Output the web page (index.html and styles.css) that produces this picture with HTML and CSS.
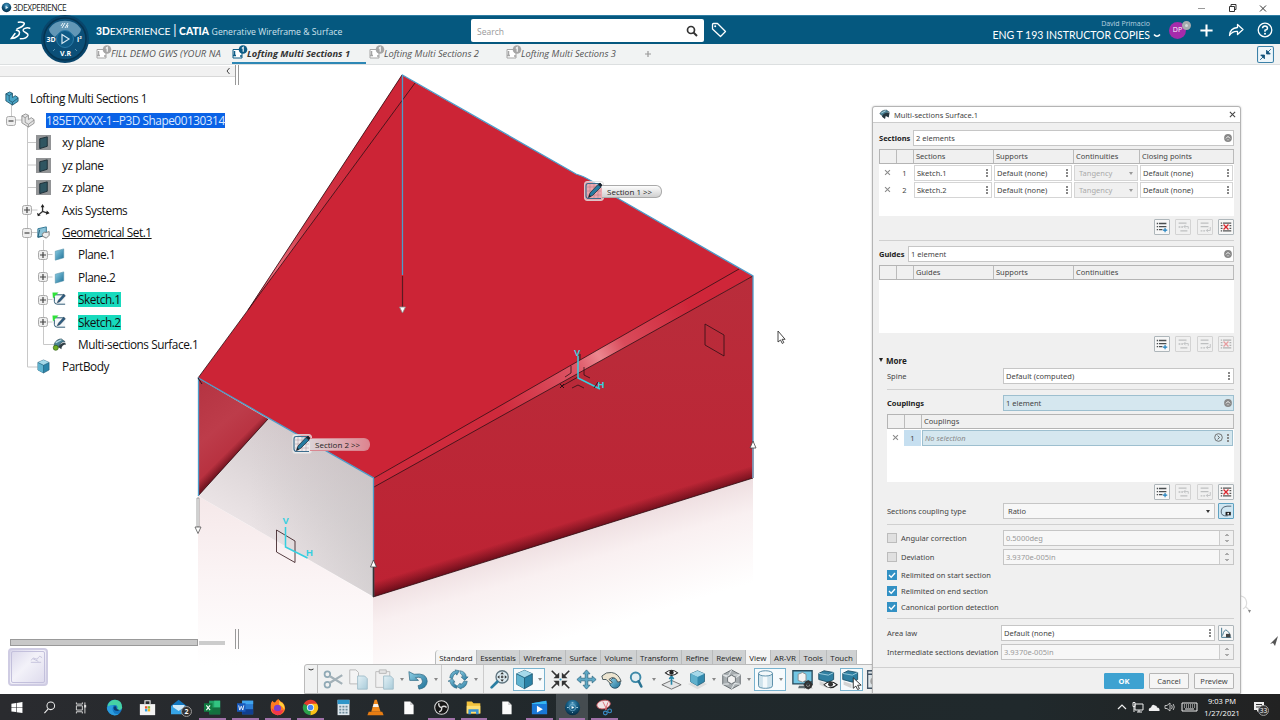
FILE: index.html
```html
<!DOCTYPE html>
<html lang="en">
<head>
  <meta charset="UTF-8" />
  <meta name="viewport" content="width=device-width, initial-scale=1.0"/>
  <title>3DEXPERIENCE</title>
  <link rel="stylesheet" href="styles.css">
</head>
<body>
  <!-- shared icons -->
  <svg class="sprite" width="0" height="0">
    <defs>
      <linearGradient id="blue" x1="0" y1="0" x2="1" y2="1">
        <stop offset="0" stop-color="#8fd0e6"/><stop offset="1" stop-color="#1c6f96"/>
      </linearGradient>
      <linearGradient id="pale" x1="0" y1="0" x2="1" y2="1">
        <stop offset="0" stop-color="#e3f1f6"/><stop offset="1" stop-color="#a9cbd9"/>
      </linearGradient>
      <radialGradient id="ball" cx="50%" cy="30%" r="70%">
        <stop offset="0" stop-color="#4f9cc4"/><stop offset="0.5" stop-color="#145a80"/><stop offset="1" stop-color="#062c45"/>
      </radialGradient>
    </defs>
    <symbol id="i-tab" viewBox="0 0 16 14">
      <path d="M1 4.500h9v8.500H1z" fill="#fff" stroke="currentColor"/>
      <path d="M2.500 6v5M1 10.500h3M8 11h2" stroke="currentColor" fill="none" stroke-width="1.500"/>
      <circle cx="11" cy="4.500" r="4.300" fill="currentColor"/>
      <path d="M9.800 3.400l1.400-1v4.400" fill="none" stroke="#fff" stroke-width="1.100"/>
    </symbol>
    <symbol id="i-surf" viewBox="0 0 16 14">
      <path d="M2 8c1-5 5-7 8-7l4 3c-4 0-6 2-7 6z" fill="#4a8093" stroke="#28424f" stroke-width=".6"/>
      <path d="M7 10c0-3 4-5 7-5l1 2c-3 0-5 2-5 5z" fill="#2f3d44"/>
      <path d="M4 5l6-3" stroke="#b7dbe6" stroke-width="1.200"/>
      <circle cx="4" cy="10.500" r="2.700" fill="#6fae24" stroke="#2d5d10" stroke-width=".7"/>
    </symbol>
    <symbol id="i-surf-dark" viewBox="0 0 16 14">
      <path d="M1 6c2-4 5-5 9-5l4 3c-5 0-7 2-8 6z" fill="#4a8093" stroke="#28424f" stroke-width=".6"/>
      <path d="M4 10c1-4 5-6 10-5l-1 6-4-2-1 4z" fill="#26373f"/>
      <path d="M3 5l6-3" stroke="#b7dbe6" stroke-width="1.200"/>
    </symbol>
    <symbol id="i-refplane" viewBox="0 0 16 16">
      <path d="M0 0h16v16H0z" fill="#929496"/>
      <path d="M4 4l8-2v10l-8 2.500z" fill="#2f5561" stroke="#1c2d35"/>
    </symbol>
    <symbol id="i-plane" viewBox="0 0 16 16">
      <path d="M3.500 4.500l9-2.500v9.500l-9 2.500z" fill="url(#blue)" stroke="#4f8ea8" stroke-width=".6"/>
    </symbol>
    <symbol id="i-sketch" viewBox="0 0 16 16">
      <path d="M2 2h12v11H5l-3-3z" fill="#f5f8fa"/>
      <path d="M2.500 5v5q0 3 3 3H14M4 3h9" fill="none" stroke="#25536e" stroke-width="1"/>
      <path d="M5.500 11.500L7 8.500l5.500-6 1.800 1.500-6 6.500z" fill="#2b5d84" stroke="#1b2a38" stroke-width=".5"/>
      <path d="M.5.500h6.500L4 3.500 1 7z" fill="#2fe23a"/>
    </symbol>
    <symbol id="i-plus" viewBox="0 0 10 10">
      <rect x=".5" y=".5" width="9" height="9" rx="2" fill="#eee" stroke="#aaa"/><path d="M2 5h6M5 2v6" stroke="#444" stroke-width="1.200"/>
    </symbol>
    <symbol id="i-minus" viewBox="0 0 10 10">
      <rect x=".5" y=".5" width="9" height="9" rx="2" fill="#eee" stroke="#aaa"/><path d="M2.500 5h5" stroke="#444" stroke-width="1.200"/>
    </symbol>
    <symbol id="i-part" viewBox="0 0 16 16">
      <path d="M2 3l4-2 3 1.500V7l3-2 3 2v4l-6 4-7-4.500z" fill="var(--f)" stroke="var(--s)" stroke-width=".9"/>
      <path d="M2 3l3.500 2v5L9 12l6-4.500M5.500 5L9 2.500M9 12v3" fill="none" stroke="var(--s)" stroke-width=".8"/>
    </symbol>
    <symbol id="i-fold" viewBox="0 0 8 8">
      <circle cx="4" cy="4" r="3.900" fill="#888"/><path d="M2 4.400l2-2 2 2" fill="none" stroke="#fff" stroke-width="1"/><path d="M2.800 5.800h2.400" stroke="#ddd" stroke-width=".7"/>
    </symbol>
    <symbol id="i-add" viewBox="0 0 16 16">
      <path d="M2 4h1.500M4.500 4h8.500M2 7.500h1.500M4.500 7.500h8.500M2 11h1.500M4.500 11h4" stroke="#4a4e50" stroke-width="1.500"/>
      <path d="M11.500 9v5M9 11.500h5" stroke="#1d7fbd" stroke-width="1.300"/>
    </symbol>
    <symbol id="i-before" viewBox="0 0 16 16">
      <path d="M3 3.500h9M5 12.500h8M3 8h2M6 8h2" stroke="#bdbfc0" stroke-width="1.500"/>
      <path d="M14 10V7.500H9M11 5.500L9 7.500l2 2" stroke="#bdbfc0" fill="none"/>
    </symbol>
    <symbol id="i-after" viewBox="0 0 16 16">
      <path d="M3 3.500h9M3 7.500h9M3 12.500h2M6 12.500h2" stroke="#bdbfc0" stroke-width="1.500"/>
      <path d="M14 8v4H9.500M11.500 10l-2 2 2 2" stroke="#bdbfc0" fill="none"/>
    </symbol>
    <symbol id="i-del" viewBox="0 0 16 16">
      <path d="M2 3.500h1.500M4.500 3.500H14M2 12.500h1.500M4.500 12.500H14" stroke="#555" stroke-width="1.400"/>
      <path d="M2 6.500h2M12 6.500h2M2 9.500h2M12 9.500h2" stroke="#555" stroke-width="1.300"/>
      <path d="M5.200 5.200l5.600 5.600M10.800 5.200l-5.600 5.600" stroke="#d8262d" stroke-width="1.500"/>
    </symbol>
    <symbol id="i-cube" viewBox="0 0 24 24">
      <path d="M12 1.500l9 4v12l-9 5-9-5v-12z" fill="#2b84a9" stroke="#164d66" stroke-width=".8"/>
      <path d="M12 1.500l9 4-9 4.500-9-4.500z" fill="#a5d9ea"/><path d="M3 5.500l9 4.500v12.500l-9-5z" fill="#5fb3d0"/>
      <path d="M3 5.500l9 4.500 9-4.500M12 10v12.500" fill="none" stroke="#164d66" stroke-width=".8"/>
    </symbol>
    <symbol id="i-label" viewBox="0 0 20 20">
      <rect x=".5" y=".5" width="19" height="19" rx="2.500" fill="#fff" fill-opacity=".6" stroke="#ddd" stroke-opacity=".8"/>
      <path d="M3 6h14M3 10h14M3 14h14M6 3v14M10 3v14M14 3v14" stroke="#88606a" stroke-opacity=".5" stroke-width=".6"/>
      <path d="M17 2.500H4Q2 2.500 2 5v10q0 2.500 3 2.500h12" fill="none" stroke="#3b6d8d" stroke-width="1.200"/>
      <path d="M4.500 16.500l1.500-4.500 8-8.500 3 2.500-8.500 8.500z" fill="#267ba0" stroke="#1c2730" stroke-width=".7"/>
      <path d="M14 3.500l3 2.500 1.500-2-2.500-2.200zM4.500 16.500l1-3 1.500 1.800z" fill="#16202a"/>
    </symbol>
    <symbol id="i-page" viewBox="0 0 20 20"><path d="M5 3h7l4 4v11H5z" fill="#fbfbfb"/><path d="M12 3v4h4" fill="#ccc"/></symbol>
  </svg>

  <div class="titlebar">
    <svg class="app-dot" viewBox="0 0 12 12"><circle cx="6" cy="6" r="5.200" fill="url(#ball)"/><path d="M5 4l3 2-3 2z" fill="#d7ebf5"/></svg>
    <span class="app-name">3DEXPERIENCE</span>
    <div class="win-buttons">
      <svg viewBox="0 0 12 12"><path d="M3 6.500h7" stroke="#999" fill="none"/></svg>
      <svg viewBox="0 0 12 12"><path d="M3.500 4.500h5v5h-5zM5 4.500v-2h5v5H8.500" stroke="#333" fill="none"/></svg>
      <svg viewBox="0 0 12 12"><path d="M3 3.500l6 6M9 3.500l-6 6" stroke="#333" fill="none"/></svg>
    </div>
  </div>

  <header class="topbar">
    <svg class="ds-logo" viewBox="28 56 66 62"><path d="M56 62C68 60 77 64 73 69C70 74 60 79 52 82M50 86C62 86 62 98 54 104C48 109 40 111 35 111L46 96M90 80C80 77 68 82 71 88C75 94 86 95 85 101C83 109 72 112 62 112" fill="none" stroke="#fff" stroke-width="4.500" stroke-linecap="round"/></svg>
    <div class="brand"><b>3D</b>EXPERIENCE <i>|</i> <b>CATIA</b> <span>Generative Wireframe &amp; Surface</span></div>
    <div class="search">
      <span>Search</span>
      <svg viewBox="0 0 12 12"><circle cx="5" cy="5" r="3.500" fill="none" stroke="#333" stroke-width="1.700"/><path d="M7.500 7.500l3.500 3.500" stroke="#333" stroke-width="2"/></svg>
    </div>
    <svg class="tag" viewBox="0 0 16 16"><path d="M1.500 2.500q0-1 1-1h4l8 8-5 5-8-7.500z" fill="none" stroke="#fff" stroke-width="1.300" stroke-linejoin="round"/><circle cx="4.200" cy="4.300" r="1" fill="#fff"/></svg>
    <div class="user">
      <div class="user-name">David Primacio</div>
      <div class="space">ENG T 193 INSTRUCTOR COPIES <svg viewBox="0 0 8 6"><path d="M1 1.500q3 3.500 6 0" fill="none" stroke="#fff" stroke-width="1.500"/></svg></div>
    </div>
    <div class="avatar">DP<span class="presence"></span></div>
    <svg class="top-ico" viewBox="0 0 16 16"><path d="M8 1.500v13M1.500 8h13" stroke="#fff" stroke-width="2.200"/></svg>
    <svg class="top-ico share" viewBox="0 0 16 16"><path d="M9.500 2.500l5.500 5-5.500 5V9.500Q4.500 9 1.500 13.500 2 6 9.500 5.500z" fill="none" stroke="#fff" stroke-width="1.300" stroke-linejoin="round"/></svg>
    <svg class="top-ico help" viewBox="0 0 16 16"><circle cx="8" cy="8" r="6.800" fill="none" stroke="#fff" stroke-width="1.300"/><path d="M5.500 6.300Q5.700 4 8 4t2.500 2.200Q10.500 7.500 8 8.300v1.500" fill="none" stroke="#fff" stroke-width="1.500"/><circle cx="8" cy="11.800" r="1" fill="#fff"/></svg>
  </header>

  <svg class="compass" viewBox="0 0 50 50">
    <circle cx="25" cy="25" r="24" fill="#08456b"/>
    <circle cx="25" cy="25" r="21" fill="#0b4f78" stroke="#053552" stroke-width="1.500"/>
    <path d="M9 15a18 15 0 0 1 32 0q0 4-6 8l-4-4a9 9 0 0 0-12 0l-4 4q-6-4-6-8z" fill="#78a9c6" fill-opacity=".8"/>
    <circle cx="25" cy="25" r="8.500" fill="#0d5a86" stroke="#2b7ba8"/>
    <path d="M22 20.500l7 4.500-7 4.500z" fill="none" stroke="#d6e8f2" stroke-width="1.200"/>
    <path d="M15 35l-2 2M35 35l2 2" stroke="#5590b0"/>
    <path d="M21 12l2-3M22 14l3-5M25 14l3-5M28 11l-1 3" stroke="#eaf4f9" fill="none"/>
    <text x="6.500" y="27.500">3D</text><text x="37" y="27.500">i²</text><text x="20" y="41.500">V.R</text>
  </svg>

  <nav class="tabs">
    <div class="tab t1"><svg><use href="#i-tab"/></svg><span>FILL DEMO GWS (YOUR NA</span></div>
    <div class="tab t2 active"><svg><use href="#i-tab"/></svg><span>Lofting Multi Sections 1</span></div>
    <div class="tab t3"><svg><use href="#i-tab"/></svg><span>Lofting Multi Sections 2</span></div>
    <div class="tab t4"><svg><use href="#i-tab"/></svg><span>Lofting Multi Sections 3</span></div>
    <svg class="tab-add" viewBox="0 0 8 8"><path d="M4 1v6M1 4h6" stroke="#999" stroke-width="1.200"/></svg>
    <svg class="shrink" viewBox="0 0 16 16"><rect x=".5" y=".5" width="15" height="15" rx="1.500" fill="#eef6fa" stroke="#3c81a8"/><path d="M13 3l-4 4M9 4v3.500h3.500zM3 13l4-4M7 12V8.500H3.500z" stroke="#10527a" stroke-width=".8" fill="#10527a"/></svg>
  </nav>

  <main class="workspace">
    <svg class="scene" viewBox="0 65 1280 629">
      <defs>
        <linearGradient id="floor" gradientUnits="userSpaceOnUse" x1="330" y1="440" x2="262" y2="556">
          <stop offset="0" stop-color="#d3c8cb"/><stop offset=".45" stop-color="#ddd6d8"/><stop offset="1" stop-color="#efe8ea"/>
        </linearGradient>
        <linearGradient id="floorDark" x1="0" x2="1"><stop offset=".3" stop-color="#c4bfc1" stop-opacity="0"/><stop offset="1" stop-color="#c2c0c1" stop-opacity=".5"/></linearGradient>
        <linearGradient id="inner" x1="0" y1="0" x2=".5" y2="1"><stop offset="0" stop-color="#b43341"/><stop offset=".45" stop-color="#bd3c4a"/><stop offset="1" stop-color="#b22433"/></linearGradient>
        <linearGradient id="front" x1="0" y1="0" x2="0" y2="1"><stop offset="0" stop-color="#b92d3b"/><stop offset="1" stop-color="#bd2233"/></linearGradient>
        <linearGradient id="refl" gradientUnits="userSpaceOnUse" x1="0" y1="496" x2="0" y2="665"><stop offset="0" stop-color="#f5e8e9"/><stop offset=".5" stop-color="#fbf4f5"/><stop offset="1" stop-color="#fff"/></linearGradient>
        <linearGradient id="reflFront" gradientUnits="userSpaceOnUse" x1="560" y1="538" x2="588" y2="632"><stop offset="0" stop-color="#efe0e2"/><stop offset=".3" stop-color="#f9f0f1"/><stop offset="1" stop-color="#fff"/></linearGradient>
        <linearGradient id="strip" gradientUnits="userSpaceOnUse" x1="500" y1="412" x2="690" y2="304"><stop offset="0" stop-color="#cf2a3c"/><stop offset=".4" stop-color="#dd5565"/><stop offset=".52" stop-color="#ec8790"/><stop offset=".65" stop-color="#d94b5b"/><stop offset="1" stop-color="#cf2639"/></linearGradient>
        <linearGradient id="strip2" gradientUnits="userSpaceOnUse" x1="230" y1="335" x2="360" y2="140"><stop offset="0" stop-color="#bf2233"/><stop offset=".35" stop-color="#ea6f7c"/><stop offset=".55" stop-color="#d23a4a"/><stop offset="1" stop-color="#cd2537"/></linearGradient>
        <linearGradient id="edgeShade" gradientUnits="userSpaceOnUse" x1="559" y1="525" x2="563" y2="538"><stop offset="0" stop-color="#5a0712" stop-opacity="0"/><stop offset="1" stop-color="#4a0510" stop-opacity=".7"/></linearGradient>
        <linearGradient id="innerShade" gradientUnits="userSpaceOnUse" x1="227" y1="452" x2="233" y2="458"><stop offset="0" stop-color="#5a0712" stop-opacity="0"/><stop offset="1" stop-color="#4a0510" stop-opacity=".6"/></linearGradient>
      </defs>
      <!-- mirrored floor -->
      <path d="M198 496L373 597V690H198z" fill="url(#refl)"/>
      <path d="M373 597L753 478V590L373 692z" fill="url(#reflFront)"/>
      <!-- solid -->
      <path d="M198 378L374 478V597L198 496z" fill="url(#floor)"/>
      <path d="M198 378L374 478V597L198 496z" fill="url(#floorDark)"/>
      <path d="M198 378L268 419 198 496z" fill="url(#inner)"/>
      <path d="M198 378L268 419 198 496z" fill="url(#innerShade)"/>
      <path d="M402 75L576 174Q590 178 612 195L753 276 374 478 198 378 248 310z" fill="#cc2436"/>
      <path d="M402 75L415 83 248 310z" fill="url(#strip2)"/>
      <path d="M753 276V478L373 597V484z" fill="url(#front)"/>
      <path d="M753 276V478L373 597V484z" fill="url(#edgeShade)"/>
      <path d="M739 269L753 276 374 487V478z" fill="url(#strip)"/>
      <g fill="none" stroke="#2d1015" stroke-width=".8">
        <path d="M402 75L248 310 198 378M415 83L248 310M739 269L374 478M753 276L374 487M268 419L198 496M373 597L753 478"/>
        <path d="M705 324l19 11v21l-19-11zM276.500 530l18.500 11v21.500L276.500 552z"/>
        <path d="M571 366v7l-6 4M584 367v8l6 3M572 388l6-3 6 3M562 386l16-9"/>
      </g>
      <path d="M402.500 275V75L576 174Q590 178 612 195L753 276V478M373.500 597V478L198.500 378V496" fill="none" stroke="#4c9dcb" stroke-width="1.300"/>
      <path d="M198 378l4 6M560 384l4 4M560 388l4-4" stroke="#2d1015" fill="none"/>
      <!-- direction arrows -->
      <g stroke="#8a8a8a" stroke-width=".8" fill="#fff">
        <path d="M402.500 276V307" stroke="#5b1a22" stroke-width="1.200"/><path d="M399.500 307h6l-3 6z"/>
        <path d="M197 498h2v29h-2z"/><path d="M195 527h6l-3 6.500z" stroke="#555"/>
        <path d="M373.500 597V567" stroke="#333" stroke-width="1.500"/><path d="M370.500 567h6l-3-7z" stroke="#444"/>
        <path d="M753 478V448" stroke="#8d99b0" stroke-width="1.500"/><path d="M750 448h6l-3-7z" stroke="#444"/>
      </g>
      <g class="axis">
        <path d="M578 356v22l22 11" stroke="#7fa6c6"/><path d="M285.500 527v20l22 11"/>
        <text x="574" y="356">V</text><text x="597.500" y="388">H</text><text x="282.500" y="524">V</text><text x="306" y="556">H</text>
      </g>
      <path d="M580 354v6M598 382l-4 6" stroke="#222"/>
      <path d="M778 331v11l2.500-2 1.800 3.500 1.500-1-1.700-3.200h3z" fill="#fff" stroke="#333" stroke-width=".9"/>
      <path d="M1241 596a7 7 0 0 1 2 13M1246 607l4 4" fill="none" stroke="#ddd" stroke-width="1.200"/>
      <path d="M1270 644l8-8-3 10-2-3z" fill="#555"/><path d="M1248 610h3l-1.500 3z" fill="#888"/>
    </svg>

    <div class="callout c1"><svg><use href="#i-label"/></svg><span>Section 1 &gt;&gt;</span></div>
    <div class="callout c2"><svg><use href="#i-label"/></svg><span>Section 2 &gt;&gt;</span></div>

    <div class="tree-head"><svg viewBox="0 0 6 8"><path d="M4.500 1L2 4l2.500 3" fill="none" stroke="#444"/></svg></div>
    <div class="splitter s-top"></div>
    <div class="splitter s-bottom"></div>

    <div class="tree">
      <svg class="lines" viewBox="0 65 80 310"><path d="M11.500 105v15h11M27.500 127v240h10M27.500 142.500h10M27.500 165h10M27.500 187.500h10M27.500 210h10M27.500 232.500h10M43.500 240v104.500h10M43.500 254.500h9M43.500 277h9M43.500 299.500h9M43.500 322h9" fill="none" stroke="#c8c8c8"/></svg>
      <div class="node l0"><svg class="ico part-blue"><use href="#i-part"/></svg><span>Lofting Multi Sections 1</span></div>
      <div class="node l1"><svg class="exp"><use href="#i-minus"/></svg><svg class="ico part-grey"><use href="#i-part"/></svg><span class="sel">185ETXXXX-1--P3D Shape00130314</span></div>
      <div class="node l2"><i class="exp"></i><svg class="ico"><use href="#i-refplane"/></svg><span>xy plane</span></div>
      <div class="node l2"><i class="exp"></i><svg class="ico"><use href="#i-refplane"/></svg><span>yz plane</span></div>
      <div class="node l2"><i class="exp"></i><svg class="ico"><use href="#i-refplane"/></svg><span>zx plane</span></div>
      <div class="node l2"><svg class="exp"><use href="#i-plus"/></svg><svg class="ico" viewBox="0 0 16 16"><path d="M7 9V3M7 9l6 2M7 9l-5 4" stroke="#333" stroke-width="1.400" fill="none"/><path d="M5 4.500l2-3.500 2 3.500zM11.500 8l3 3-4 1.500zM1 10.500l1 3.500 3-1z" fill="#222"/></svg><span>Axis Systems</span></div>
      <div class="node l2"><svg class="exp"><use href="#i-minus"/></svg><svg class="ico" viewBox="0 0 16 16"><path d="M2 4l9-2v9l-9 2z" fill="#8cc4d9" stroke="#2e7391"/><path d="M4 5l-2 8 5-1" fill="none" stroke="#245f78"/><path d="M7 12a3 3 0 0 1 4-4l3-1v4l-3 3z" fill="#eee" stroke="#777"/></svg><span class="under">Geometrical Set.1</span></div>
      <div class="node l3"><svg class="exp"><use href="#i-plus"/></svg><svg class="ico"><use href="#i-plane"/></svg><span>Plane.1</span></div>
      <div class="node l3"><svg class="exp"><use href="#i-plus"/></svg><svg class="ico"><use href="#i-plane"/></svg><span>Plane.2</span></div>
      <div class="node l3"><svg class="exp"><use href="#i-plus"/></svg><svg class="ico"><use href="#i-sketch"/></svg><span class="hit">Sketch.1</span></div>
      <div class="node l3"><svg class="exp"><use href="#i-plus"/></svg><svg class="ico"><use href="#i-sketch"/></svg><span class="hit">Sketch.2</span></div>
      <div class="node l3"><i class="exp"></i><svg class="ico"><use href="#i-surf"/></svg><span>Multi-sections Surface.1</span></div>
      <div class="node l2"><i class="exp"></i><svg class="ico" viewBox="0 0 24 24"><use href="#i-cube"/></svg><span>PartBody</span></div>
    </div>

    <div class="hscroll"><b></b><i></i></div>
    <div class="thumb"><svg viewBox="0 0 34 32"><path d="M20 9q3-4 5-2t3-1 4 0M20 11h11M22 7l6 3" fill="none" stroke="#c4c2dc"/></svg></div>

    <div class="actionbar">
      <div class="ab-tabs">
        <span class="on first">Standard</span><span>Essentials</span><span>Wireframe</span><span>Surface</span><span>Volume</span><span>Transform</span><span>Refine</span><span>Review</span><span class="on">View</span><span>AR-VR</span><span>Tools</span><span>Touch</span>
      </div>
      <div class="ab-tools">
        <div class="handle"><svg viewBox="0 0 8 6"><path d="M1.500 2q2.500 2 5 0" fill="none" stroke="#333"/></svg></div>
        <svg class="tool" viewBox="0 0 24 24"><g fill="none" stroke="#8fa9b5" stroke-width="2"><circle cx="5" cy="6" r="3.200"/><circle cx="5" cy="18" r="3.200"/><path d="M7.500 8L22 17M7.500 16L22 7" stroke="#a3b1b8" stroke-width="2.600"/></g></svg>
        <svg class="tool" viewBox="0 0 24 24"><path d="M2 1h7l3 3v13H2z" fill="#f4f4f4" stroke="#b5b5b5"/><path d="M11 8h8l3 3v12H11z" fill="url(#pale)" stroke="#9dbac7"/></svg>
        <svg class="tool" viewBox="0 0 24 24"><path d="M2 3h16v18H2z" fill="#f0f0f0" stroke="#b9b9b9"/><path d="M6 1h8v4H6z" fill="#e4e4e4" stroke="#b5b5b5"/><path d="M11 8h8l3 3v12H11z" fill="url(#pale)" stroke="#9dbac7"/></svg>
        <i class="dd"></i>
        <svg class="tool" viewBox="0 0 24 24"><path d="M1 3l1 10h10l-3.500-3q7.500-2 8 4 0 4-5 5l1 4q9-1 9.500-9-.5-10-15-8z" fill="url(#blue)" stroke="#2c6680" stroke-width=".8"/></svg>
        <i class="dd"></i><i class="sep"></i>
        <svg class="tool" viewBox="0 0 24 24"><g fill="url(#blue)" stroke="#2c6680" stroke-width=".7"><path d="M2 10q1-7 7-8l-1-1 5 1-3 5-1-2q-3 1-4 6z"/><path d="M14 2q6 1 7 7h2l-4 4-4-4h2q-1-3-3-4z"/><path d="M22 14q-1 7-7 8v1l-5-3 4-4v2q3-1 4-4z"/><path d="M10 22q-6-1-8-8H0l5-3 3 4H6q1 3 4 4z"/></g></svg>
        <i class="dd"></i><i class="sep wide"></i>
        <svg class="tool" viewBox="0 0 24 24"><circle cx="15" cy="9" r="7" fill="#dcebf1" stroke="#60757f" stroke-width="1.500"/><path d="M15 3.500l2 2.500h-4zM15 14.500l2-2.500h-4zM9.500 9l2.500-2v4zM20.500 9L18 7v4z" fill="#333"/><circle cx="15" cy="9" r="1.500" fill="#555"/><path d="M9.500 14.500L3 21" stroke="#2b7ea2" stroke-width="3.200" stroke-linecap="round"/></svg>
        <div class="boxed split"><svg class="tool"><use href="#i-cube"/></svg><i class="dd"></i></div>
        <svg class="tool" viewBox="0 0 24 24"><path d="M2 2l7 7M22 2l-7 7M2 22l7-7M22 22l-7-7" stroke="#333" stroke-width="1.800"/><path d="M10.500 4v6.500H4zM13.500 4v6.500H20zM10.500 20v-6.500H4zM13.500 20v-6.500H20z" fill="#333"/><circle cx="12" cy="12" r="1.200" fill="#3298c0"/></svg>
        <svg class="tool" viewBox="0 0 24 24"><path d="M12 1l4 4.500h-2.500v5h5V8l4.500 4-4.500 4v-2.500h-5v5H16L12 23l-4-4.500h2.500v-5h-5V16L1 12l4.500-4v2.500h5v-5H8z" fill="#5ea9c6" stroke="#27617b" stroke-width=".8"/></svg>
        <svg class="tool" viewBox="0 0 24 24"><circle cx="16" cy="16" r="6" fill="url(#blue)" stroke="#234f63"/><path d="M1 8q5-5 11-4 8 1 11 10l-4 1q-2-6-7-5l-3 2 4 3-2 2-5-5H2z" fill="#ece4d0" stroke="#3a4a50" stroke-width="1"/></svg>
        <svg class="tool" viewBox="0 0 24 24"><circle cx="11" cy="9.500" r="5.500" fill="#e4eef2" stroke="#3e89a8" stroke-width="2.200"/><path d="M14.500 14l3 6" stroke="#2b7493" stroke-width="3" stroke-linecap="round"/></svg>
        <i class="dd"></i>
        <svg class="tool" viewBox="0 0 24 24"><path d="M1 18l11-5 11 5-11 5z" fill="#e4e6e7" stroke="#666"/><path d="M12 18V9M9.500 11.500L12 8l2.500 3.500" stroke="#2887a9" stroke-width="1.800" fill="none"/><path d="M5 4.500q7-6 14 0-7 6-14 0z" fill="#fff" stroke="#222" stroke-width="1.200"/><circle cx="12" cy="4" r="2.500" fill="#222"/></svg>
        <svg class="tool nar" viewBox="0 0 24 24"><path d="M1 17l11-4 11 4-11 6z" fill="#ddd"/><path d="M12 2l8 3.500v9L12 19l-8-4.500v-9z" fill="#3289ad" stroke="#1d566f" stroke-width=".8"/><path d="M12 2l8 3.500L12 9 4 5.500z" fill="#a6d8e9"/><path d="M4 5.500L12 9v10l-8-4.500z" fill="#5fb0cc"/></svg>
        <i class="dd"></i>
        <svg class="tool" viewBox="0 0 24 24"><path d="M12 1l10 5.500v11L12 23 2 17.500v-11z" fill="#a7adb0" stroke="#5d6468"/><path d="M12 1L8.500 8 2 6.500M22 6.500L14 7M12 23l3.500-6.500 6.500 1M2 17.500L9 17M22 6.500L16.500 10v5M2 6.500l5.500 3v5" stroke="#dfe3e5" fill="none" stroke-width="1.200"/><path d="M12 7l4.500 2.500v5L12 17l-4.500-2.500v-5z" fill="#f3f3f3" stroke="#5d6468"/></svg>
        <i class="dd"></i>
        <div class="boxed split"><svg class="tool" viewBox="0 0 24 24"><path d="M4 5v14q0 3 8 3t8-3V5z" fill="#cfe3ec" stroke="#4b84a0"/><path d="M9 8h5v13H9z" fill="#f3f9fb"/><ellipse cx="12" cy="5" rx="8" ry="3" fill="#f2f8fa" stroke="#4b84a0"/></svg><i class="dd"></i></div>
        <svg class="tool" viewBox="0 0 24 24"><path d="M1 2h22v15H1z" fill="#72c6e4" stroke="#28495a" stroke-width="1.500"/><path d="M8 19h8l1 3H7z" fill="#5f6b70"/><path d="M7 6l5-2 4 2v7l-4 2-5-2z" fill="#f4f4f4" stroke="#888"/><circle cx="18.500" cy="18" r="3.500" fill="none" stroke="#333" stroke-width="2.500"/><path d="M18.500 12.500v11M13 18h11M14.500 14l8 8M22.500 14l-8 8" stroke="#333" stroke-width="1"/></svg>
        <svg class="tool" viewBox="0 0 24 24"><path d="M2 5l6-3 11 2v8l-6 3L2 12z" fill="#2f7fa1" stroke="#1b4f66"/><path d="M2 5l11 2 6-3" fill="none" stroke="#a3d2e2"/><path d="M3 14l9 3v5l-9-4z" fill="#d3d3d3"/><path d="M8 18q7-7 15 0-8 7-15 0z" fill="#fff" stroke="#222" stroke-width="1.200"/><circle cx="15.500" cy="17.500" r="2.800" fill="#333"/></svg>
        <div class="boxed"><svg class="tool" viewBox="0 0 24 24"><path d="M2 5l6-3 11 2v8l-6 3L2 12z" fill="#2f7fa1" stroke="#1b4f66"/><path d="M2 5l11 2 6-3" fill="none" stroke="#a3d2e2"/><path d="M3 14l9 3v5l-9-4z" fill="#d3d3d3"/><path d="M14 10v12l3-2.500 2 4 2-1-2-4h4z" fill="#fff" stroke="#222"/></svg></div>
        <svg class="tool last" viewBox="0 0 24 24"><path d="M3 2h20v20H3zM3 6h20" fill="#dfe6e9" stroke="#456" stroke-width="1.500"/><circle cx="10" cy="14" r="4" fill="#aaa"/></svg>
      </div>
    </div>

    <section class="dialog">
      <div class="dlg-head">
        <svg><use href="#i-surf-dark"/></svg><span>Multi-sections Surface.1</span>
        <svg class="close" viewBox="0 0 8 8"><path d="M1 1l6 6M7 1L1 7" stroke="#444" stroke-width="1.200"/></svg>
      </div>
      <div class="dlg-body">
        <div class="row r-first"><b class="lbl-sec">Sections</b><div class="field">2 elements<svg class="fold"><use href="#i-fold"/></svg></div></div>
        <div class="grid sections">
          <div class="th"><span></span><span></span><span>Sections</span><span>Supports</span><span>Continuities</span><span>Closing points</span></div>
          <div class="tr"><i class="x"></i><em>1</em><div class="cell dots">Sketch.1</div><div class="cell dots">Default (none)</div><div class="cell off">Tangency</div><div class="cell dots">Default (none)</div></div>
          <div class="tr"><i class="x"></i><em>2</em><div class="cell dots">Sketch.2</div><div class="cell dots">Default (none)</div><div class="cell off">Tangency</div><div class="cell dots">Default (none)</div></div>
        </div>
        <div class="btns"><svg><use href="#i-add"/></svg><svg class="dis"><use href="#i-before"/></svg><svg class="dis"><use href="#i-after"/></svg><svg><use href="#i-del"/></svg></div>
        <hr>
        <div class="row"><b class="lbl-gui">Guides</b><div class="field">1 element<svg class="fold"><use href="#i-fold"/></svg></div></div>
        <div class="grid guides">
          <div class="th"><span></span><span></span><span>Guides</span><span>Supports</span><span>Continuities</span></div>
        </div>
        <div class="btns"><svg><use href="#i-add"/></svg><svg class="dis"><use href="#i-before"/></svg><svg class="dis"><use href="#i-after"/></svg><svg class="dis faded"><use href="#i-del"/></svg></div>
        <div class="more"><i></i><b>More</b></div>
        <div class="sub">
          <div class="row r-spine"><span class="lbl">Spine</span><div class="field dots">Default (computed)</div></div>
          <hr>
          <div class="row"><b class="lbl">Couplings</b><div class="field blue">1 element<svg class="fold"><use href="#i-fold"/></svg></div></div>
          <div class="grid couplings">
            <div class="th"><span></span><span></span><span>Couplings</span></div>
            <div class="tr"><i class="x"></i><em class="cur">1</em><div class="cell blue dots"><q>No selection</q><svg class="go" viewBox="0 0 8 8"><circle cx="4" cy="4" r="3.400" fill="none" stroke="#666" stroke-width=".8"/><path d="M3.200 2.400L4.900 4 3.200 5.600" fill="none" stroke="#555" stroke-width=".8"/></svg></div></div>
          </div>
          <div class="btns b-coup"><svg><use href="#i-add"/></svg><svg class="dis"><use href="#i-before"/></svg><svg class="dis"><use href="#i-after"/></svg><svg><use href="#i-del"/></svg></div>
          <div class="row r3"><span class="lbl">Sections coupling type</span><div class="field select">Ratio</div><svg class="sq on" viewBox="0 0 16 16"><path d="M14 2.500Q3 1.500 2.500 8T10 13.500" fill="none" stroke="#456" stroke-width="1"/><path d="M7.500 9h6v4h-6z" fill="#222"/><circle cx="10.500" cy="11" r="1" fill="#fff"/></svg></div>
          <hr>
          <div class="row"><label class="chk"><i></i>Angular correction</label><div class="field off spin">0.5000deg</div></div>
          <div class="row r3"><label class="chk"><i></i>Deviation</label><div class="field off spin">3.9370e-005in</div></div>
          <div class="checks">
            <label class="chk"><i class="on"><svg viewBox="0 0 10 10"><path d="M2 5l2.200 2.300L8 3" fill="none" stroke="#fff" stroke-width="1.300"/></svg></i>Relimited on start section</label>
            <label class="chk"><i class="on"><svg viewBox="0 0 10 10"><path d="M2 5l2.200 2.300L8 3" fill="none" stroke="#fff" stroke-width="1.300"/></svg></i>Relimited on end section</label>
            <label class="chk"><i class="on"><svg viewBox="0 0 10 10"><path d="M2 5l2.200 2.300L8 3" fill="none" stroke="#fff" stroke-width="1.300"/></svg></i>Canonical portion detection</label>
          </div>
          <hr class="h3">
          <div class="row law"><span class="lbl">Area law</span><div class="field dots">Default (none)</div><svg class="sq" viewBox="0 0 16 16"><path d="M3 2v11h11M4 11Q6 3 9 5t4 7" fill="none" stroke="#356a85" stroke-width="1"/><path d="M8 9h5v4H8z" fill="#444"/></svg></div>
          <div class="row r3 law"><span class="lbl">Intermediate sections deviation</span><div class="field off spin">3.9370e-005in</div></div>
        </div>
      </div>
      <div class="dlg-foot"><button class="ok">OK</button><button>Cancel</button><button>Preview</button></div>
    </section>
  </main>

  <footer class="taskbar">
    <div class="apps">
      <div><svg viewBox="0 0 20 20"><path d="M4 5.500l5.500-.8v5H4zM10.200 4.600L17 3.500v6.200h-6.800zM4 10.400h5.500v5L4 14.600zM10.200 10.400H17v6.200l-6.800-1.100z" fill="#fff"/></svg></div>
      <div><svg viewBox="0 0 20 20"><circle cx="11.500" cy="8" r="4.500" fill="none" stroke="#eee" stroke-width="1.200"/><path d="M8.500 11.500L4 16.500" stroke="#eee" stroke-width="1.300"/></svg></div>
      <div><svg viewBox="0 0 20 20"><path d="M4 4v2h7V4M4 8h7v5H4zM4 17v-2h7v2M14 4v13" fill="none" stroke="#ddd" stroke-width="1.100"/><path d="M13 7h2.500v3H13z" fill="#ddd"/></svg></div>
      <div><svg viewBox="0 0 20 20"><circle cx="10" cy="10" r="9" fill="#1478c4"/><path d="M2 7Q5 1 11 1q8 1 8 9-1 4-6 3 2-6-3-6-5 0-8 3z" fill="#46d2a4"/><path d="M1 11q2-5 8-3-3 5 1 9 3 1 6 0-5 4-10 1-4-2-5-7z" fill="#2b9cde"/><path d="M9 9q-1 5 5 5l2-1q-4-1-4-3 0-2-3-1z" fill="#0c3c6e"/></svg></div>
      <div><svg viewBox="0 0 20 20"><path d="M1 6h18v13H1z" fill="#f2f2f2"/><path d="M7 6V2h6v4" fill="none" stroke="#f2f2f2" stroke-width="1.300"/><path d="M7 8.500h2.800v2.800H7z" fill="#e8502a"/><path d="M10.300 8.500h2.800v2.800h-2.800z" fill="#7fba2a"/><path d="M7 11.800h2.800v2.800H7z" fill="#2aa4e8"/><path d="M10.300 11.800h2.800v2.800h-2.800z" fill="#f6b81c"/></svg></div>
      <div><svg viewBox="0 0 20 20"><path d="M0 8l9-7 9 7v9H0z" fill="#1176bf"/><path d="M2 7h14v6l-7 4-7-4z" fill="#cfe9f8"/><path d="M0 8l9 6 9-6v10H0z" fill="#37a4e6"/></svg><small>2</small></div>
      <div class="run"><svg viewBox="0 0 20 20"><path d="M6 2h13v16H6z" fill="#21a366"/><path d="M12 2h7v8h-7z" fill="#33c481"/><path d="M6 10h13v8H6z" fill="#14703f"/><path d="M0 5h10v10H0z" fill="#107c41"/><path d="M2.800 7.500l4.400 5.500M7.200 7.500L2.800 13" stroke="#fff" stroke-width="1.300"/></svg></div>
      <div class="run"><svg viewBox="0 0 20 20"><path d="M6 2h13v16H6z" fill="#2b7cd3"/><path d="M6 2h13v4H6z" fill="#41a5ee"/><path d="M6 12h13v6H6z" fill="#103f91"/><path d="M0 5h10v10H0z" fill="#185abd"/><path d="M2 7.500L3.200 13 5 8.500 6.800 13 8 7.500" stroke="#fff" fill="none"/></svg></div>
      <div class="run"><svg viewBox="0 0 20 20"><path d="M2 8q0-4 2-6 1 2 3 2 2-3 4-4 1 3 5 4 3 3 3 7-1 8-9 8-8-1-8-8z" fill="#ff7a1f"/><path d="M12 1q1 3 4 4 3 3 2 8-2-5-6-6z" fill="#ffd13b"/><circle cx="10" cy="11" r="4.200" fill="#7a3fd0"/><path d="M3 11q4 4 8 3l6-1q-2 6-7 6-6-1-7-8z" fill="#f4354c"/></svg></div>
      <div class="run"><svg viewBox="0 0 20 20"><path d="M10 10L2.200 5.500a9 9 0 0 1 15.600 0z" fill="#e33b2e"/><path d="M10 10L2.200 5.500A9 9 0 0 0 10 19z" fill="#2ba24c"/><path d="M10 10v9a9 9 0 0 0 7.800-13.500H10z" fill="#fbc116"/><circle cx="10" cy="10" r="4.200" fill="#fff"/><circle cx="10" cy="10" r="3.300" fill="#4587f3"/></svg></div>
      <div><svg viewBox="0 0 20 20"><path d="M3 1h14v18H3z" fill="#dfe9ef"/><path d="M3 1h14v5H3z" fill="#2f96c9"/><path d="M5 9h10M5 12.500h10M5 16h10" stroke="#6e8c9c" stroke-width="2" stroke-dasharray="2.400 1.300"/></svg></div>
      <div><svg viewBox="0 0 20 20"><path d="M9 1h2.500L16 15H5z" fill="#f28a1c"/><path d="M7.800 6h5l1 3.500H6.800z" fill="#f5f0ea"/><path d="M2 15h16l1.500 4H.5z" fill="#e77d12"/></svg></div>
      <div><svg><use href="#i-page"/></svg></div>
      <div class="run"><svg viewBox="0 0 20 20"><circle cx="10" cy="10" r="8" fill="#161616" stroke="#ddd" stroke-width="1.200"/><path d="M10 10q-4-1-3-5M10 10q3-3 6 0M10 10q1 4-3 5" stroke="#ddd" fill="none" stroke-width="1.700"/></svg></div>
      <div class="run"><svg viewBox="0 0 20 20"><path d="M2 3h6l2 2h8v12H2z" fill="#f3c23c"/><path d="M2 8h16v9H2z" fill="#ffdf73"/><path d="M4 12h12v6h-3v-3H7v3H4z" fill="#3a92d2"/></svg></div>
      <div><svg><use href="#i-page"/></svg></div>
      <div class="run"><svg viewBox="0 0 20 20"><path d="M1 5l17-3 1 3v13H1z" fill="#1a78d6"/><path d="M1 5l17-3v4H1z" fill="#36b6ee"/><path d="M7 8l7 4-7 4z" fill="#fff"/></svg></div>
      <div class="run cur"><svg viewBox="0 0 20 20"><circle cx="10" cy="10" r="9" fill="url(#ball)"/><circle cx="10" cy="10" r="3.800" fill="none" stroke="#7fb7d3" stroke-width=".8"/><path d="M9 8.300l3 1.700-3 1.700z" fill="#fff"/><path d="M3.500 10h2M14.500 10h2M10 15.500v1M9 4.500h2" stroke="#bfe0ef"/></svg></div>
      <div class="run"><svg viewBox="0 0 20 20"><ellipse cx="9" cy="6.500" rx="8" ry="5" fill="#f0e5e6" stroke="#c9545d" transform="rotate(-12 9 7)"/><path d="M8 3l5 10M14 4l-3 9" stroke="#d9626b"/><circle cx="11" cy="16.500" r="2.200" fill="none" stroke="#3a8fc9" stroke-width="1.300"/><circle cx="16" cy="14" r="2.200" fill="none" stroke="#3a8fc9" stroke-width="1.300"/></svg></div>
    </div>
    <div class="tray">
      <svg class="t-up" viewBox="0 0 12 12"><path d="M2 8l4-4 4 4" fill="none" stroke="#eee" stroke-width="1.200"/></svg>
      <svg class="t-net" viewBox="0 0 12 12"><path d="M3 3h8v6H3zM5 11h5M7 9v2M1 1.500v4h2v-4zM2 6v5" fill="none" stroke="#eee"/></svg>
      <svg class="t-cloud" viewBox="0 0 12 12"><path d="M1 10q-1-3 2-3.500Q4 2.500 7 4.500q2 0 2 2 3 0 2.500 3.500z" fill="#eee"/></svg>
      <svg class="t-vol" viewBox="0 0 12 12"><path d="M1 4.500h2L6 2v8L3 7.500H1zM7.500 4q1.500 2 0 4M9.200 3q2.200 3 0 6" fill="none" stroke="#ccc" stroke-width=".9"/></svg>
      <svg class="t-kbd" viewBox="0 0 17 12"><path d="M1 2h15v8H1z" fill="none" stroke="#eee"/><path d="M3 4h11M3 6h11" stroke="#eee" stroke-dasharray="1 1"/><path d="M4 8h9" stroke="#eee"/></svg>
      <div class="clock"><span>9:03 PM</span><span>1/27/2021</span></div>
      <div class="notes"><svg viewBox="0 0 12 12"><path d="M1 1h10v8H6l-2 2V9H1z" fill="#eee"/><path d="M3 3.500h6M3 6h6" stroke="#333"/></svg><small>33</small></div>
    </div>
  </footer>
</body>
</html>
```
FILE: styles.css
```css
* {
  box-sizing: border-box;
}

body {
  margin: 0;
  width: 1280px;
  height: 720px;
  overflow: hidden;
  display: flex;
  flex-direction: column;
  position: relative;
  background: #fff;
  font-family: "Open Sans", "Noto Sans", sans-serif;
  color: #333;
}

svg {
  display: block;
  flex: none;
}

.sprite {
  position: absolute;
}

/* title bar */
.titlebar {
  height: 15px;
  flex: none;
  display: flex;
  align-items: center;
  background: #fff;
}

.app-dot {
  width: 11px;
  height: 11px;
  margin-left: 1px;
}

.app-name {
  margin-left: 1px;
  font-size: 8.500px;
  letter-spacing: -0.5px;
  color: #222;
}

.win-buttons {
  margin-left: auto;
  display: flex;
  gap: 19px;
  margin-right: 11px;
}

.win-buttons svg {
  width: 12px;
  height: 12px;
}

/* blue bar */
.topbar {
  height: 29px;
  flex: none;
  display: flex;
  align-items: center;
  background: #05587f;
  border-top: 1px solid #2e7da3;
  color: #fff;
}

.ds-logo {
  width: 22px;
  height: 21px;
  margin-left: 9px;
}

.brand {
  width: 375px;
  margin-left: 65px;
  font-family: Lato, sans-serif;
  font-size: 10.300px;
  white-space: nowrap;
}

.brand b {
  font-weight: 900;
}

.brand i {
  font-style: normal;
  font-size: 13px;
}

.brand span {
  font-family: "Open Sans", sans-serif;
  font-size: 8.700px;
  color: #cfe3ee;
}

.search {
  width: 233px;
  height: 23px;
  padding: 2px 6px 0;
  border-radius: 2px;
  background: #fff;
  display: flex;
  align-items: center;
  justify-content: space-between;
  font-size: 8.500px;
  color: #999;
}

.search svg {
  width: 12px;
  height: 12px;
}

.tag {
  width: 16px;
  height: 16px;
  margin-left: 7px;
}

.user {
  width: 254px;
  margin-left: 180px;
  text-align: right;
  line-height: 11px;
}

.user-name {
  font-size: 7px;
  color: #b9d3e0;
  padding-right: 11px;
  height: 11px;
}

.space {
  display: flex;
  justify-content: flex-end;
  align-items: center;
  gap: 3px;
  font-family: Lato, sans-serif;
  font-size: 10.500px;
  height: 13px;
  white-space: nowrap;
}

.space svg {
  width: 8px;
  height: 6px;
}

.avatar {
  position: relative;
  width: 17px;
  height: 17px;
  margin-left: 8px;
  border-radius: 50%;
  background: #a62bab;
  font-size: 7px;
  line-height: 16px;
  text-align: center;
}

.presence {
  position: absolute;
  right: -5px;
  top: -1px;
  width: 9px;
  height: 9px;
  border-radius: 50%;
  background: #d5dadc;
  border: 3px solid #a5abae;
}

.top-ico {
  width: 15px;
  height: 15px;
  margin-left: 13px;
}

.top-ico.share {
  margin-left: 14px;
  width: 16px;
  height: 16px;
}

.top-ico.help {
  width: 16px;
  height: 16px;
}

.compass {
  position: absolute;
  left: 40px;
  top: 14px;
  width: 50px;
  height: 50px;
  z-index: 2;
}

.compass text {
  font: bold 7px "Open Sans", sans-serif;
  fill: #fff;
}

/* document tabs */
.tabs {
  height: 21px;
  flex: none;
  display: flex;
  background: #f1f3f3;
  border-bottom: 1px solid #dcdfe0;
}

.tab {
  display: flex;
  height: 20px;
  font-size: 9.300px;
  font-style: italic;
  line-height: 20px;
  color: #555;
  white-space: nowrap;
}

.tab svg {
  width: 16px;
  height: 14px;
  margin-top: 1px;
  color: #a5a5a5;
}

.tab.t1 {
  width: 136px;
  margin-left: 96px;
  font-size: 9.500px;
}

.tab.t2 {
  width: 134px;
}

.tab.t3 {
  width: 137px;
  padding-left: 3px;
}

.tab.t4 {
  width: 137px;
  padding-left: 3px;
}

.tab span {
  margin-left: -1px;
}

.tab.active {
  font-weight: bold;
  color: #333;
  border-bottom: 2px solid #2d87b5;
}

.tab.active svg {
  color: #0d5c85;
}

.tab-add {
  width: 8px;
  height: 8px;
  margin: 6px 0 0 4px;
}

.shrink {
  width: 17px;
  height: 17px;
  margin: 2px 6px 0 auto;
}

/* 3D view */
.workspace {
  position: relative;
  flex: 1;
  overflow: hidden;
}

.scene {
  position: absolute;
  left: 0;
  top: 0;
  width: 1280px;
  height: 629px;
}

.axis path {
  fill: none;
  stroke: #35cfe0;
  stroke-width: 1.500;
}

.axis text {
  font: bold 9.500px "Liberation Sans", sans-serif;
  fill: #35cfe0;
}

.callout {
  position: absolute;
  display: flex;
  align-items: center;
}

.callout svg {
  width: 20px;
  height: 20px;
}

.callout span {
  height: 13px;
  width: 60px;
  margin-left: -2px;
  padding-left: 5px;
  border: 1px solid #aaa;
  border-left: 0;
  border-radius: 0 6px 6px 0;
  background: linear-gradient(#fdfdfd, #d0d0d0);
  font-size: 8px;
  line-height: 11px;
  white-space: nowrap;
  color: #222;
}

.c1 {
  left: 584px;
  top: 116px;
}

.c2 {
  left: 292px;
  top: 369px;
}

.c2 span {
  background: linear-gradient(90deg, #dcd3d6, #dd8590);
  border-color: #d98791;
}

.tree-head {
  position: absolute;
  left: 0;
  top: 1px;
  width: 236px;
  height: 11px;
  background: #f1f1f1;
  border-bottom: 1px solid #d8d8d8;
}

.tree-head svg {
  width: 6px;
  height: 8px;
  margin: 1px 0 0 225px;
}

.splitter {
  position: absolute;
  left: 235px;
  width: 4px;
  height: 20px;
  border: 1px solid #999;
  border-width: 0 1px;
}

.s-top {
  top: 0;
}

.s-bottom {
  top: 564px;
}

/* feature tree */
.tree {
  position: absolute;
  left: 0;
  top: 0;
  padding-top: 22px;
}

.lines {
  position: absolute;
  left: 0;
  top: 0;
  width: 80px;
  height: 310px;
}

.node {
  position: relative;
  display: flex;
  align-items: center;
  height: 22.400px;
  font-size: 11.800px;
  letter-spacing: -0.45px;
  white-space: nowrap;
  color: #111;
}

.node .exp {
  width: 10px;
  height: 10px;
  margin-right: 4px;
}

.node .ico {
  width: 15px;
  height: 15px;
  margin-right: 11px;
}

.node span {
  line-height: 15px;
}

.l0 {
  padding-left: 4px;
}

.l1 {
  padding-left: 6px;
}

.l2 {
  padding-left: 22px;
}

.l3 {
  padding-left: 38px;
}

.part-blue {
  --f: #4aa6c8;
  --s: #1d4f66;
}

.part-grey {
  --f: #e4e4e4;
  --s: #888;
}

.sel {
  background: #0a62e6;
  color: #dce9ff;
}

.hit {
  background: #17dabd;
}

.under {
  text-decoration: underline;
}

.hscroll {
  position: absolute;
  left: 10px;
  top: 574px;
  display: flex;
  align-items: center;
  gap: 1px;
}

.hscroll b {
  width: 188px;
  height: 7px;
  background: #c8c8c8;
  border: 1px solid #999;
}

.hscroll i {
  width: 26px;
  height: 4px;
  background: #ccc;
}

.thumb {
  position: absolute;
  left: 8px;
  top: 583px;
  width: 40px;
  height: 38px;
  padding: 1px;
  border: 2px solid #cfcce3;
  border-radius: 4px;
  background: linear-gradient(135deg, #d9d6ea, #f3f2f9 45%, #dcd9ec);
}

.thumb svg {
  width: 34px;
  height: 32px;
  border: 1px solid #c3c0dc;
  border-radius: 2px;
}

/* action bar */
.actionbar {
  position: absolute;
  left: 304px;
  top: 585px;
  width: 570px;
}

.ab-tabs {
  display: flex;
  width: 422px;
  height: 14px;
  margin-left: 131px;
  font-size: 8px;
  letter-spacing: -0.1px;
  line-height: 15px;
  color: #222;
}

.ab-tabs span {
  flex: 1 0 auto;
  text-align: center;
  background: #cfd1d2;
  border-right: 1px solid #b9bbbc;
}

.ab-tabs .on {
  background: #f4f4f4;
}

.ab-tabs .first {
  border-top-left-radius: 4px;
  border-left: 1px solid #b9bbbc;
}

.ab-tools {
  display: flex;
  align-items: center;
  height: 30px;
  background: #f0f1f1;
  border: 1px solid #bbb;
  border-radius: 3px 0 0 0;
  overflow: hidden;
}

.handle {
  width: 13px;
  height: 30px;
  flex: none;
  margin-right: 3px;
  border-right: 1px solid #bbb;
}

.handle svg {
  width: 8px;
  height: 6px;
  margin: 3px 0 0 2px;
}

.tool {
  width: 21px;
  height: 21px;
  margin: 0 2.150px;
}

.dd {
  width: 9.500px;
  display: flex;
  justify-content: center;
  flex: none;
}

.dd::before {
  content: "";
  border: 2px solid transparent;
  border-top: 3px solid #888;
  border-bottom: 0;
}

.sep {
  width: 5px;
  height: 28px;
  flex: none;
  border-left: 1px solid #ccc;
}

.sep.wide {
  margin-left: 2px;
  width: 4px;
}

.boxed {
  display: flex;
  align-items: center;
  flex: none;
  width: 23px;
  height: 23px;
  background: #f7fbfd;
  border: 1px solid #79b3cf;
}

.boxed .tool {
  margin: 0;
}

.boxed.split {
  width: 32px;
  margin: 0 3px 0 1px;
}

.tool.nar {
  margin: 0 1.500px 0 2.500px;
}

/* dialog */
.dialog {
  position: absolute;
  left: 872px;
  top: 41px;
  width: 369px;
  height: 588px;
  background: #f0f0f0;
  border: 1px solid #b4b4b4;
  border-radius: 3px 3px 0 0;
  font-family: "Noto Sans", sans-serif;
  font-size: 7.500px;
  color: #444;
  box-shadow: 0 0 2px rgba(0, 0, 0, 0.25);
}

.dlg-head {
  display: flex;
  align-items: center;
  height: 16px;
  background: #fff;
  border-bottom: 1px solid #ccc;
  padding: 0 4px 0 6px;
  border-radius: 3px 3px 0 0;
}

.dlg-head svg {
  width: 12px;
  height: 11px;
  margin-right: 3px;
}

.dlg-head .close {
  width: 7px;
  height: 7px;
  margin: 0 0 0 auto;
}

.dlg-body {
  padding: 0 6px;
}

.dialog b {
  color: #222;
}

.row {
  display: flex;
  align-items: center;
  gap: 3px;
  height: 16px;
  margin-top: 5px;
}

.r-first {
  margin-top: 7px;
}

.r-spine {
  margin-top: 1px;
}

.r3 {
  margin-top: 3px;
}

.lbl-sec {
  width: 31px;
}

.lbl-gui {
  width: 26px;
}

.lbl {
  width: 113px;
  flex: none;
  white-space: nowrap;
}

.law .lbl {
  width: 111px;
}

.field {
  position: relative;
  flex: 1;
  height: 16px;
  padding-left: 2px;
  line-height: 15px;
  background: #fff;
  border: 1px solid #c6c6c6;
}

.fold {
  position: absolute;
  right: 1px;
  top: 3px;
  width: 8px;
  height: 8px;
}

.field.blue,
.cell.blue {
  background: #d5e7ef;
  border-color: #9dbfcf;
}

.field.off {
  background: #f7f7f7;
  color: #999;
}

.dots::after {
  content: "";
  position: absolute;
  right: 3px;
  top: 3px;
  width: 2px;
  height: 8px;
  background: repeating-linear-gradient(#888 0 2px, transparent 2px 3px);
}

.select {
  background: #f7f7f7;
  padding-left: 4px;
}

.select::after,
.cell.off::after {
  content: "";
  position: absolute;
  right: 4px;
  top: 6px;
  border: 2.500px solid transparent;
  border-top: 3px solid #333;
  border-bottom: 0;
}

.cell.off::after {
  border-top-color: #999;
}

.spin::before {
  content: "";
  position: absolute;
  right: 0;
  top: 0;
  width: 13px;
  height: 14px;
  background: #f0f0f0;
  border-left: 1px solid #ccc;
}

/* up and down arrows */
.spin::after {
  content: "";
  position: absolute;
  right: 4px;
  top: 3px;
  width: 4px;
  height: 8px;
  background:
    linear-gradient(#aaa, #aaa) 0 1px / 4px 1px no-repeat,
    linear-gradient(#aaa, #aaa) 1px 0 / 2px 2px no-repeat,
    linear-gradient(#aaa, #aaa) 0 6px / 4px 1px no-repeat,
    linear-gradient(#aaa, #aaa) 1px 6px / 2px 2px no-repeat;
}

.grid {
  margin-top: 3px;
  height: 67px;
  background: #fff;
}

.th,
.tr {
  display: grid;
  grid-template-columns: 17px 17px 80px 80px 66px 1fr;
}

.guides {
  height: 68px;
}

.guides .th {
  grid-template-columns: 17px 17px 80px 80px 1fr;
}

.couplings {
  height: 68px;
}

.couplings .th,
.couplings .tr {
  grid-template-columns: 17px 17px 1fr;
}

.th {
  height: 15px;
  background: #f0f0f0;
  border: 1px solid #b4b4b4;
  border-right: 0;
  line-height: 13px;
}

.th span {
  border-right: 1px solid #bbb;
  padding-left: 2px;
}

.tr {
  height: 17px;
  padding-top: 1px;
  line-height: 16px;
}

.tr em {
  font-style: normal;
  text-align: center;
}

.tr .cur {
  background: #c6dff0;
  height: 16px;
}

.x {
  position: relative;
}

.x::before,
.x::after {
  content: "";
  position: absolute;
  left: 5px;
  top: 7px;
  width: 7px;
  height: 1px;
  background: #888;
  transform: rotate(45deg);
}

.x::after {
  transform: rotate(-45deg);
}

.cell {
  position: relative;
  height: 16px;
  margin: 0 1px;
  padding-left: 2px;
  border: 1px solid #d5d5d5;
  line-height: 14px;
}

.cell.off {
  background: #f0f0f0;
  color: #aaa;
  padding-left: 4px;
}

.cell q {
  quotes: none;
  font-style: italic;
  color: #888;
}

.go {
  position: absolute;
  right: 9px;
  top: 2px;
  width: 9px;
  height: 9px;
}

.btns {
  display: flex;
  justify-content: flex-end;
  gap: 5.500px;
  margin-top: 3px;
}

.b-coup {
  margin-top: 2px;
}

.btns svg,
.sq {
  width: 16px;
  height: 16px;
  background: #f7f7f7;
  border: 1px solid #aeb6ba;
  border-radius: 1px;
}

.btns .dis {
  background: none;
  border-color: #d3d3d3;
}

.faded use {
  opacity: 0.4;
}

.sq.on {
  background: #cfe6f2;
  border-color: #5fa2c2;
}

.dialog hr {
  height: 1px;
  margin: 5px 0 0;
  border: 0;
  background: #d0d0d0;
}

.dialog .h3 {
  margin: 3px 0 6px;
}

.h3 + .row {
  margin-top: 0;
}

.more {
  display: flex;
  align-items: center;
  height: 14px;
  margin-top: 1px;
}

.more i {
  border: 2.500px solid transparent;
  border-top: 4px solid #222;
  border-bottom: 0;
  margin-right: 3px;
}

.more b {
  font-size: 8px;
}

.sub {
  padding-left: 8px;
}

.chk {
  display: flex;
  align-items: center;
  width: 113px;
  height: 16px;
  white-space: nowrap;
}

.chk i {
  width: 10px;
  height: 10px;
  margin-right: 4px;
  background: #e0e0e0;
  border: 1px solid #bcbcbc;
}

.chk .on {
  background: #3391c4;
  border: 0;
}

.checks {
  margin-top: 2px;
}

.dlg-foot {
  display: flex;
  justify-content: flex-end;
  gap: 5px;
  margin-top: 7px;
  padding: 5px 6px 0;
  border-top: 1px solid #d0d0d0;
}

.dlg-foot button {
  width: 40px;
  height: 16px;
  padding: 0;
  background: #f5f5f5;
  border: 1px solid #b5b5b5;
  border-radius: 1px;
  font: 7.500px "Noto Sans", sans-serif;
  color: #444;
}

.dlg-foot .ok {
  background: #3ea2d1;
  border-color: #3ea2d1;
  color: #fff;
  font-weight: bold;
}

/* windows taskbar */
.taskbar {
  height: 26px;
  flex: none;
  display: flex;
  justify-content: space-between;
  background: linear-gradient(90deg, #2a2b2f, #20282b 50%, #20292c 80%, #222);
}

.apps {
  display: flex;
}

.apps div {
  position: relative;
  width: 32.700px;
  height: 26px;
  display: flex;
  align-items: center;
  justify-content: center;
}

.apps svg {
  width: 17px;
  height: 17px;
}

.apps small {
  position: absolute;
  right: 4px;
  top: 12px;
  width: 11px;
  height: 11px;
  border: 1px solid #999;
  border-radius: 50%;
  background: #333;
  color: #fff;
  font-size: 7px;
  font-weight: bold;
  line-height: 9px;
  text-align: center;
}

.apps .run::after {
  content: "";
  position: absolute;
  left: 3px;
  right: 3px;
  bottom: 0;
  height: 2px;
  background: #a071a8;
}

.apps .cur {
  background: #454c50;
}

.tray {
  display: flex;
  align-items: center;
  width: 164px;
}

.tray > svg {
  height: 12px;
  width: 12px;
}

.tray .t-net {
  margin-left: 4px;
}

.tray .t-cloud {
  margin-left: 4px;
}

.tray .t-vol {
  margin-left: 4px;
}

.tray .t-kbd {
  width: 17px;
  margin-left: 5px;
}

.clock {
  display: flex;
  flex-direction: column;
  align-items: center;
  width: 38px;
  margin-left: 5px;
  color: #fff;
  font-size: 7.500px;
  line-height: 12px;
}

.notes {
  position: relative;
  margin-left: 12px;
}

.notes svg {
  width: 12px;
  height: 12px;
}

.notes small {
  position: absolute;
  left: 5px;
  top: 4px;
  width: 11px;
  height: 11px;
  border: 1px solid #999;
  border-radius: 50%;
  background: #333;
  color: #fff;
  font-size: 6.500px;
  line-height: 9px;
  text-align: center;
}
```
